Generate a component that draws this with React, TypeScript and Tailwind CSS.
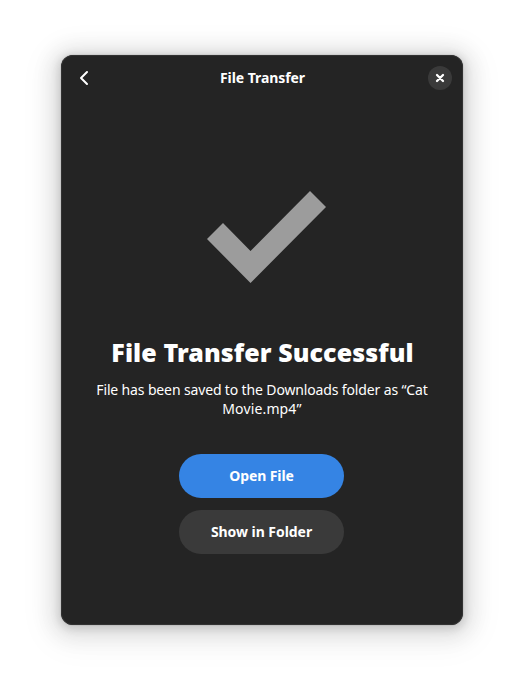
export default function App() {
  return (
    <div className="h-[692px] w-[524px] overflow-hidden bg-white px-[61px] pt-[55px] font-['Noto_Sans',sans-serif] text-white">
      <main className="flex h-[570px] w-[402px] flex-col rounded-xl bg-[#242424] shadow-[0_2px_8px_2px_rgba(0,0,0,0.13),0_3px_20px_10px_rgba(0,0,0,0.09),0_6px_32px_16px_rgba(0,0,0,0.04),0_0_0_1px_rgba(0,0,0,0.05)] ring-1 ring-inset ring-[#323232]">
        <header className="grid h-[46px] grid-cols-[1fr_auto_1fr] items-center pr-[11px] pl-[14px]">
          <button aria-label="Back" className="flex h-6 w-4 items-center justify-center">
            <svg width="16" height="16" viewBox="0 0 16 16" fill="none" stroke="white" strokeWidth="2" strokeLinecap="round" strokeLinejoin="round">
              <path d="m12 2-6 6 6 6" />
            </svg>
          </button>
          <h1 className="mr-0.5 text-[14px] leading-6 font-bold tracking-[-0.06px]">File Transfer</h1>
          <button aria-label="Close" className="flex size-6 items-center justify-center justify-self-end rounded-full bg-[#3a3a3a]">
            <svg width="16" height="16" viewBox="0 0 16 16" stroke="white" strokeWidth="2.3" strokeLinecap="round">
              <path d="m5 5 6 6m0-6-6 6" />
            </svg>
          </button>
        </header>
        <section className="flex flex-col items-center pt-[90px]">
          <svg className="ml-[9px]" width="119" height="92" viewBox="0 0 119 92"><path d="M0 48 16 32 43.5 60 103 0 119 16 43.5 92Z" fill="#9c9c9c" /></svg>
          <h2 className="mt-[49px] ml-px text-[25px] leading-[40px] font-black tracking-[0.09px]">File Transfer Successful</h2>
          <p className="mt-2 text-center text-[14px] leading-[19px] tracking-[-0.14px]">File has been saved to the Downloads folder as “Cat<br /><span className="tracking-[0.14px]">Movie.mp4”</span></p>
          <button className="mt-9 mr-px h-11 w-[165px] rounded-full bg-[#3584e4] pb-0.5 text-[14px] font-bold tracking-[-0.08px]">Open File</button>
          <button className="mt-3 mr-px h-11 w-[165px] rounded-full bg-[#3a3a3a] pb-0.5 text-[14px] font-bold tracking-[-0.05px]">Show in Folder</button>
        </section>
      </main>
    </div>
  );
}
